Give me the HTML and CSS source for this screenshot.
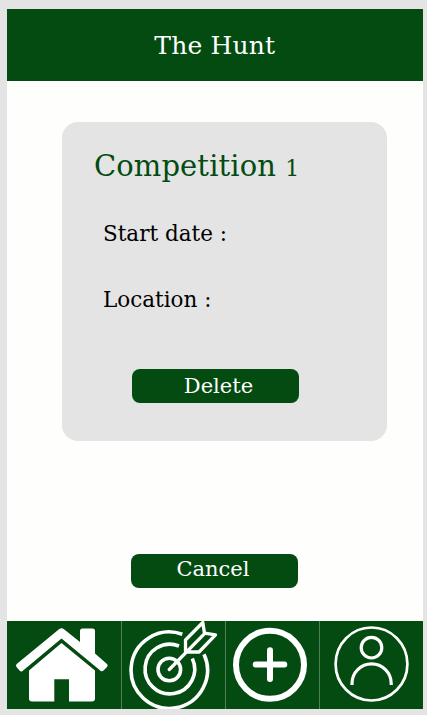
FILE: index.html
```html
<!DOCTYPE html>
<html lang="en">
<head>
<meta charset="utf-8">
<title>The Hunt</title>
<link rel="stylesheet" href="styles.css">
</head>
<body>
<div class="app">
  <header class="header"><h1>The Hunt</h1></header>
  <main class="content">
    <section class="card">
      <h2>Competition <span class="numeral">1</span></h2>
      <p class="field">Start date :</p>
      <p class="field">Location :</p>
      <button class="button delete">Delete</button>
    </section>
    <button class="button cancel">Cancel</button>
  </main>
  <nav class="nav">
    <a class="tab home" aria-label="Home">
      <svg viewBox="7 621 114 88" width="114" height="88" fill="#fff">
        <path d="M59 629.3Q61.500 627.300 64 629.300L80 642V631Q80 628.500 82.500 628.500H92.500Q95 628.500 95 631V653.500L107 664Q108.500 665.500 107 667L103.500 670.500Q102 672 100.500 670.700L61.500 638.500L22.500 671Q21 672.200 19.700 670.800L16.500 667Q15.300 665.500 16.700 664Z"/>
        <path d="M61.500 643L95 670.500V698.500Q95 701.500 92 701.500H69V679.300H54.300V701.500H32Q29 701.500 29 698.500V670.500Z"/>
      </svg>
    </a>
    <a class="tab target" aria-label="Hunts">
      <svg viewBox="121 621 104 88" width="104" height="88" fill="none" stroke="#fff" stroke-width="3.600">
        <path d="M182.300 634.300A38.200 38.200 0 1 0 204 654.300"/>
        <path d="M179 646A24.800 24.800 0 1 0 192.300 658.500"/>
        <circle cx="169.300" cy="669.500" r="11.300"/>
        <path stroke-width="3.300" stroke-linecap="round" stroke-linejoin="round" d="M169.300 669.500L204.500 633.700M185.500 651.500V640L202.800 622.500L204.500 633.200L215.500 634.800L199 652H186"/>
      </svg>
    </a>
    <a class="tab add" aria-label="Add">
      <svg viewBox="225 621 94 88" width="94" height="88" fill="none" stroke="#fff" stroke-width="6">
        <circle cx="270" cy="664.800" r="34"/>
        <path stroke-linecap="round" d="M255.700 664.500H284.300M270 650.200V679"/>
      </svg>
    </a>
    <a class="tab profile" aria-label="Profile">
      <svg viewBox="319 621 104 88" width="104" height="88" fill="none" stroke="#fff" stroke-width="3.200">
        <ellipse cx="371.500" cy="664" rx="35.900" ry="36.500" stroke-width="2.700"/>
        <circle cx="371.500" cy="647.700" r="10.300"/>
        <path d="M352 685V683.500A19.600 19.600 0 0 1 391.200 683.500V685"/>
      </svg>
    </a>
  </nav>
</div>
</body>
</html>
```
FILE: styles.css
```css
* { box-sizing: border-box; }
body {
  margin: 0;
  padding: 9px 4.500px 6px 7px;
  height: 715px;
  background: #e4e4e4;
  color: #000;
  font-family: "DejaVu Serif", serif;
}
h1, h2, p { margin: 0; font-weight: 400; white-space: nowrap; }
.app {
  display: flex;
  flex-direction: column;
  height: 700px;
  background: #fefefc;
}
.header {
  height: 72px;
  flex: none;
  padding-top: 20px;
  background: #034b11;
  color: #fff;
  text-align: center;
}
h1 { font-size: 25px; line-height: 33px; letter-spacing: .15px; }
.content {
  display: flex;
  flex-direction: column;
  flex: 1;
  padding: 41px 0 0 55px;
}
.card {
  width: 325px;
  height: 319px;
  padding: 25px 0 0 32px;
  border-radius: 16px;
  background: #e4e4e4;
}
h2 { font-size: 29px; line-height: 38px; letter-spacing: .1px; color: #034b11; }
.numeral { font-size: 22px; }
.field { margin: 31px 0 0 9px; font-size: 21.500px; line-height: 30px; }
.field + .field { margin-top: 36px; }
.button {
  display: block;
  width: 167px;
  height: 34px;
  padding: 0 0 1px 6px;
  border: 0;
  border-radius: 8px;
  background: #034b11;
  color: #fff;
  font: 21px/32px "DejaVu Serif", serif;
}
.delete { margin: 54px 0 0 38px; }
.cancel { margin: 113px 0 0 69px; padding: 0 3px 4px 0; line-height: 28px; }
.nav { display: flex; flex: none; height: 88px; background: #034b11; }
.tab { position: relative; flex: none; height: 88px; }
.tab svg { display: block; }
.home { width: 114px; }
.target { width: 104px; }
.add { width: 94px; }
.profile { flex: 1; overflow: hidden; }
.tab + .tab { box-shadow: inset 1px 0 #50805a; }
```
